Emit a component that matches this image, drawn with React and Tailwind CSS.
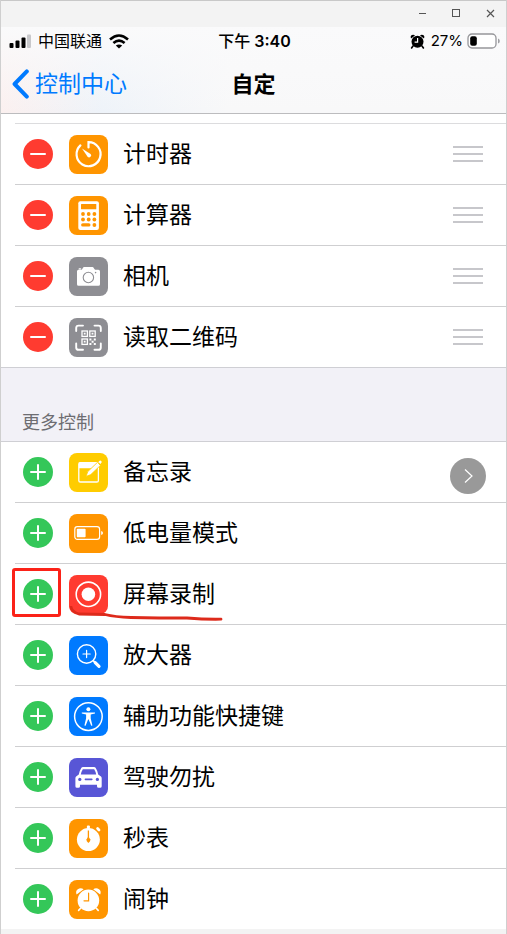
import React from "react";

const glyphs = {
  timer: (
    <>
      <path
        d="M19.5 12.5V7.2A12 12 0 1 1 11.4 10.4"
        fill="none"
        stroke="#fff"
        strokeWidth="2.2"
        strokeLinecap="round"
      />
      <path d="M13 13.4L21.6 18.9A2 2 0 0 1 18.6 21.7Z" fill="#fff" />
    </>
  ),
  calculator: (
    <>
      <rect x="9.3" y="5.3" width="20.6" height="28.8" rx="2" fill="#fff" />
      <g fill="#ff9500">
        <rect x="12" y="8" width="15.3" height="5.3" rx="0.5" />
        {[14, 19.7, 25.4].map((x) => (
          <React.Fragment key={x}>
            <circle cx={x} cy="18" r="1.9" />
            <circle cx={x} cy="23.5" r="1.9" />
          </React.Fragment>
        ))}
        <rect x="12.1" y="27.2" width="9.4" height="3.4" rx="1.7" />
        <circle cx="25.4" cy="29" r="1.9" />
      </g>
    </>
  ),
  camera: (
    <>
      <path
        d="M9.5 12.8H12.6C13.4 12.8 13.6 10 15 10H23.6C25 10 25.2 12.8 26.2 12.8H29.4Q31 12.8 31 14.4V27.2Q31 28.7 29.4 28.7H9.5Q8 28.7 8 27.2V14.4Q8 12.8 9.5 12.8Z"
        fill="#fff"
      />
      <rect x="9.6" y="11.2" width="2.6" height="1.2" rx="0.5" fill="#fff" />
      <circle cx="19.4" cy="20.5" r="5.2" fill="none" stroke="#8e8e93" strokeWidth="1.1" />
      <circle cx="26.6" cy="15.6" r="0.8" fill="#8e8e93" />
    </>
  ),
  qr: (
    <>
      <path
        d="M7.2 13V10Q7.2 7.6 9.6 7.6H14M25.5 7.6H29.4Q31.8 7.6 31.8 10V13M31.8 25.5V29.4Q31.8 31.8 29.4 31.8H25.5M14 31.8H9.6Q7.2 31.8 7.2 29.4V25.5"
        fill="none"
        stroke="#fff"
        strokeWidth="1.9"
        strokeLinecap="round"
      />
      <g fill="none" stroke="#fff" strokeWidth="1.3">
        <rect x="13" y="13" width="5.4" height="5.4" />
        <rect x="20.8" y="13" width="5.4" height="5.4" />
        <rect x="13" y="21" width="5.4" height="5.4" />
      </g>
      <path
        d="M14.8 14.8h1.8v1.8h-1.8zM22.6 14.8h1.8v1.8h-1.8zM14.8 22.8h1.8v1.8h-1.8zM20.4 20.6h2v2h-2zM24.8 20.6h2v2h-2zM22.6 22.8h2v2h-2zM20.4 25h2v2h-2zM24.8 25h2v2h-2z"
        fill="#fff"
      />
    </>
  ),
  notes: (
    <>
      <rect x="9.8" y="9.6" width="19.6" height="19.4" rx="1.6" fill="none" stroke="#fff" strokeWidth="1.3" />
      <path d="M9.8 9.6H29L24 15.2H9.8Z" fill="#fff" />
      <path
        d="M17 23.4L18.8 18.6L28.4 9.4L31.4 12.4L21.8 21.6Z"
        fill="#fff"
        stroke="#ffcc00"
        strokeWidth="0.8"
      />
      <path d="M29.4 9L30.6 7.8Q31.4 7.2 32.2 8Q33.2 8.9 32.4 9.8L31.4 11Z" fill="#fff" />
    </>
  ),
  battery: (
    <>
      <rect x="5.8" y="12.6" width="24.8" height="12.8" rx="2.6" fill="none" stroke="#fff" strokeWidth="1.2" />
      <rect x="7.8" y="14.7" width="8.8" height="8.6" rx="0.8" fill="#fff" />
      <path d="M32.2 17Q34 17.4 34 19T32.2 21Z" fill="#fff" />
    </>
  ),
  record: (
    <>
      <circle cx="19.4" cy="19.3" r="12.2" fill="none" stroke="#fff" strokeWidth="1.6" />
      <circle cx="19.4" cy="19.3" r="6.8" fill="#fff" />
    </>
  ),
  magnifier: (
    <g fill="none" stroke="#fff" strokeLinecap="round">
      <circle cx="17.6" cy="18" r="9.2" strokeWidth="1.4" />
      <path d="M17.6 14.4V21.6M14 18H21.2" strokeWidth="1.2" />
      <path d="M24.4 24.8L26 26.4" strokeWidth="1.8" />
      <path d="M26.2 26.6L30 30.4" strokeWidth="3.2" />
    </g>
  ),
  accessibility: (
    <>
      <circle cx="19.4" cy="19.6" r="13.8" fill="none" stroke="#fff" strokeWidth="1.5" />
      <circle cx="19.4" cy="12.2" r="2" fill="#fff" />
      <path
        d="M12.8 15.6L17.6 15.4H21.2L26 15.6V16.6L21.7 17.6V21.2L23.4 28.4L22.2 28.8L19.7 22.6H19.1L16.6 28.8L15.4 28.4L17.1 21.2V17.6L12.8 16.6Z"
        fill="#fff"
      />
    </>
  ),
  car: (
    <>
      <path
        d="M12.4 9.8Q13 9 14 9H25Q26 9 26.6 9.8Q28.4 12.6 29.2 16.4L32 18.6Q32.7 19.2 32.7 20.2V28.2Q32.7 29.8 31.1 29.8H29.6Q28 29.8 28 28.2V26.8H11V28.2Q11 29.8 9.4 29.8H8Q6.4 29.8 6.4 28.2V20.2Q6.4 19.2 7.1 18.6L9.8 16.4Q10.6 12.6 12.4 9.8Z"
        fill="#fff"
      />
      <path d="M13.8 11.2H25.2Q26.6 13.4 27.2 16.6H11.8Q12.4 13.4 13.8 11.2Z" fill="#5856d6" />
      <circle cx="10.8" cy="21.4" r="1.6" fill="#5856d6" />
      <circle cx="28.4" cy="21.4" r="1.6" fill="#5856d6" />
      <rect x="15.6" y="20.6" width="8" height="1.6" rx="0.8" fill="#5856d6" />
    </>
  ),
  stopwatch: (
    <>
      <circle cx="19.4" cy="20.6" r="11.5" fill="#fff" />
      <rect x="17.9" y="6.4" width="3" height="4" rx="1" fill="#fff" />
      <path d="M28.6 9.6L30 11" stroke="#fff" strokeWidth="2.8" strokeLinecap="round" />
      <path d="M19.4 11.6V20" stroke="#ff9500" strokeWidth="1.3" />
      <path d="M19.4 17.4L21.4 20.4Q21.6 22.2 19.4 24Q17.2 22.2 17.4 20.4Z" fill="#ff9500" />
    </>
  ),
  alarm: (
    <>
      <circle cx="19.4" cy="20.4" r="10.8" fill="#fff" />
      <path
        d="M7.6 14.6Q6.2 11.2 8.8 9.2Q11.6 7.2 14.6 9.2ZM31.2 14.6Q32.6 11.2 30 9.2Q27.2 7.2 24.2 9.2Z"
        fill="#fff"
      />
      <path d="M11.8 28L9.6 30.4M27 28L29.2 30.4" stroke="#fff" strokeWidth="1.6" strokeLinecap="round" />
      <path d="M19.6 13.2V20.8H15" fill="none" stroke="#ff9500" strokeWidth="1.2" strokeLinecap="round" />
    </>
  ),
};

const included = [
  { label: "计时器", icon: "timer", color: "bg-[#ff9500]" },
  { label: "计算器", icon: "calculator", color: "bg-[#ff9500]" },
  { label: "相机", icon: "camera", color: "bg-[#8e8e93]" },
  { label: "读取二维码", icon: "qr", color: "bg-[#8e8e93]" },
];

const more = [
  { label: "备忘录", icon: "notes", color: "bg-[#ffcc00]", arrow: true },
  { label: "低电量模式", icon: "battery", color: "bg-[#ff9500]" },
  { label: "屏幕录制", icon: "record", color: "bg-[#ff3b30]", marked: true },
  { label: "放大器", icon: "magnifier", color: "bg-[#007aff]" },
  { label: "辅助功能快捷键", icon: "accessibility", color: "bg-[#007aff]" },
  { label: "驾驶勿扰", icon: "car", color: "bg-[#5856d6]" },
  { label: "秒表", icon: "stopwatch", color: "bg-[#ff9500]" },
  { label: "闹钟", icon: "alarm", color: "bg-[#ff9500]" },
];

const ControlRow = ({ item, added }) => (
  <li className="relative flex h-[61px] items-center border-b border-[#cfcfd1] pl-2 pr-[23px] last:h-[60px] last:border-b-0">
    <button
      type="button"
      aria-label={(added ? "移除" : "添加") + item.label}
      className={
        added
          ? "relative flex size-[30px] shrink-0 items-center justify-center rounded-full bg-[#ff3b30]"
          : "relative flex size-[30px] shrink-0 items-center justify-center rounded-full bg-[#34c759]"
      }
    >
      <svg className="size-4" viewBox="0 0 16 16" stroke="#fff" strokeWidth="2" strokeLinecap="round">
        <path d={added ? "M1 8H15" : "M1 8H15M8 1V15"} />
      </svg>
      {item.marked && (
        <span className="absolute -bottom-2 -left-[11px] -right-2 -top-[11px] rounded-[3px] border-3 border-[#fb2218]" />
      )}
    </button>
    <span className={`ml-4 size-[39px] shrink-0 overflow-hidden rounded-[8px] ${item.color}`}>
      <svg className="size-full" viewBox="0 0 39 39">
        {glyphs[item.icon]}
      </svg>
    </span>
    <span className="ml-[15px] text-[23px] leading-8 text-black">{item.label}</span>
    {added && (
      <button type="button" aria-label={"移动" + item.label} className="ml-auto flex w-[30px] flex-col gap-[5px]">
        <span className="h-[2px] bg-[#c7c7cb]" />
        <span className="h-[2px] bg-[#c7c7cb]" />
        <span className="h-[2px] bg-[#c7c7cb]" />
      </button>
    )}
    {item.arrow && (
      <button
        type="button"
        aria-label="下一页"
        className="absolute right-5 top-4 flex size-9 items-center justify-center rounded-full bg-[#999999]"
      >
        <svg className="size-4" viewBox="0 0 16 16" fill="none" stroke="#fff" strokeWidth="1.2">
          <path d="M5 1.5L12 8L5 14.5" />
        </svg>
      </button>
    )}
    {/* hand-drawn underline */}
    {item.marked && (
      <svg className="absolute left-[54px] top-[42px] h-4 w-[156px]" viewBox="0 0 156 16">
        <path
          d="M2 1Q3 6 10 8L36 8.5Q46 11 62 11.5Q90 12 118 12Q136 13.5 152 13.2"
          fill="none"
          stroke="#dd2a1b"
          strokeWidth="2.8"
          strokeLinecap="round"
        />
      </svg>
    )}
  </li>
);

const TitleBar = () => (
  <div className="flex h-[27px] items-center justify-end gap-[22px] border-t border-[#c8c8c8] bg-[#f3f3f3] pr-2.5">
    <button type="button" aria-label="最小化">
      <svg className="size-3" viewBox="0 0 12 12" stroke="#555">
        <path d="M3 5.5H10" />
      </svg>
    </button>
    <button type="button" aria-label="最大化">
      <svg className="size-3" viewBox="0 0 12 12" fill="none" stroke="#555">
        <rect x="2.5" y="1.5" width="7" height="7" />
      </svg>
    </button>
    <button type="button" aria-label="关闭">
      <svg className="size-3" viewBox="0 0 12 12" stroke="#555" strokeWidth="1.2">
        <path d="M3 2L10 9M10 2L3 9" />
      </svg>
    </button>
  </div>
);

const StatusBar = () => (
  <div className="grid h-7 grid-cols-[1fr_auto_1fr] items-center pl-2 pr-1.5 text-[16px] leading-6">
    <div className="flex items-center gap-[7px]">
      <svg className="h-[15px] w-[22px]" viewBox="0 0 22 15">
        <rect x="0.5" y="9" width="4" height="5" rx="1" />
        <rect x="6.5" y="6.5" width="4" height="7.5" rx="1" />
        <rect x="12.5" y="3.5" width="4" height="10.5" rx="1" />
        <rect x="18" y="0.5" width="4" height="13.5" rx="1" fill="#c8c8cb" />
      </svg>
      <span>中国联通</span>
      <svg className="h-[15px] w-5" viewBox="0 0 20 15" fill="none" stroke="#000" strokeWidth="2.6">
        <path d="M1 5.4Q10 -2.4 19 5.4" />
        <path d="M4.4 9Q10 4.2 15.6 9" />
        <path d="M10 14.6L6.8 11.6Q10 9.2 13.2 11.6Z" fill="#000" stroke="none" />
      </svg>
    </div>
    <span className="font-semibold">
      <span className="font-medium">下午</span> 3:40
    </span>
    <div className="flex items-center justify-end gap-1">
      <svg className="mr-0.5 size-[15px]" viewBox="0 0 15 15">
        <circle cx="7.5" cy="7.8" r="6" />
        <path d="M1 4.4Q0 1.8 2 1Q3.6 0.2 5 1.4ZM14 4.4Q15 1.8 13 1Q11.4 0.2 10 1.4Z" />
        <path d="M3 12L1.6 14M12 12L13.4 14" stroke="#000" strokeWidth="1.6" strokeLinecap="round" />
        <path d="M7.6 4V8.2H4.6" fill="none" stroke="#fff" strokeWidth="1.2" />
      </svg>
      <span className="text-[15px]">27%</span>
      <svg className="h-4 w-[33px]" viewBox="0 0 33 16">
        <rect x="1" y="1" width="28" height="14" rx="4" fill="#fff" stroke="#96969a" strokeWidth="1.3" />
        <rect x="3.2" y="3.2" width="6.6" height="9.6" rx="2" />
        <path d="M31 5.4Q32.8 6 32.8 8T31 10.6Z" fill="#a0a0a4" />
      </svg>
    </div>
  </div>
);

const App = () => {
  return (
    <div className="border-x border-[#cfcfcf] bg-white font-['Inter','Noto_Sans_CJK_SC',sans-serif] text-black">
      <TitleBar />
      <header className="border-b border-[#bcbcbe] bg-[#f9f9fa] bg-[linear-gradient(to_right,#fbf0ef,#eef3f9_20%,#f8f8f9_45%)]">
        <div className="bg-linear-to-b from-[#fafafb] to-transparent">
          <StatusBar />
          <div className="grid h-[58px] grid-cols-[1fr_auto_1fr] items-center px-2.5 text-[23px] leading-8">
            <a href="#control-center" className="flex items-center gap-1.5 text-[#007aff]">
              <svg className="h-[30px] w-[18px]" viewBox="0 0 18 30" fill="none" stroke="currentColor" strokeWidth="4">
                <path d="M15.8 2.4L3.6 15L15.8 27.6" strokeLinecap="round" strokeLinejoin="round" />
              </svg>
              <span>控制中心</span>
            </a>
            <h1 className="text-[22px] font-bold">自定</h1>
          </div>
        </div>
      </header>

      <main>
        <ul className="mt-[9px] ml-[14px] border-t border-[#dcdcde]">
          {included.map((item) => (
            <ControlRow key={item.label} item={item} added />
          ))}
        </ul>
        <h2 className="flex h-[75px] items-end border-y border-[#cfcfd4] bg-[#f2f1f7] px-[21px] pb-1 text-[18px] leading-7 text-[#6d6d72]">
          更多控制
        </h2>
        <ul className="ml-[14px]">
          {more.map((item) => (
            <ControlRow key={item.label} item={item} />
          ))}
        </ul>
      </main>
      <footer className="h-1.5 bg-[#f3f3f3]" />
    </div>
  );
};

export default App;
